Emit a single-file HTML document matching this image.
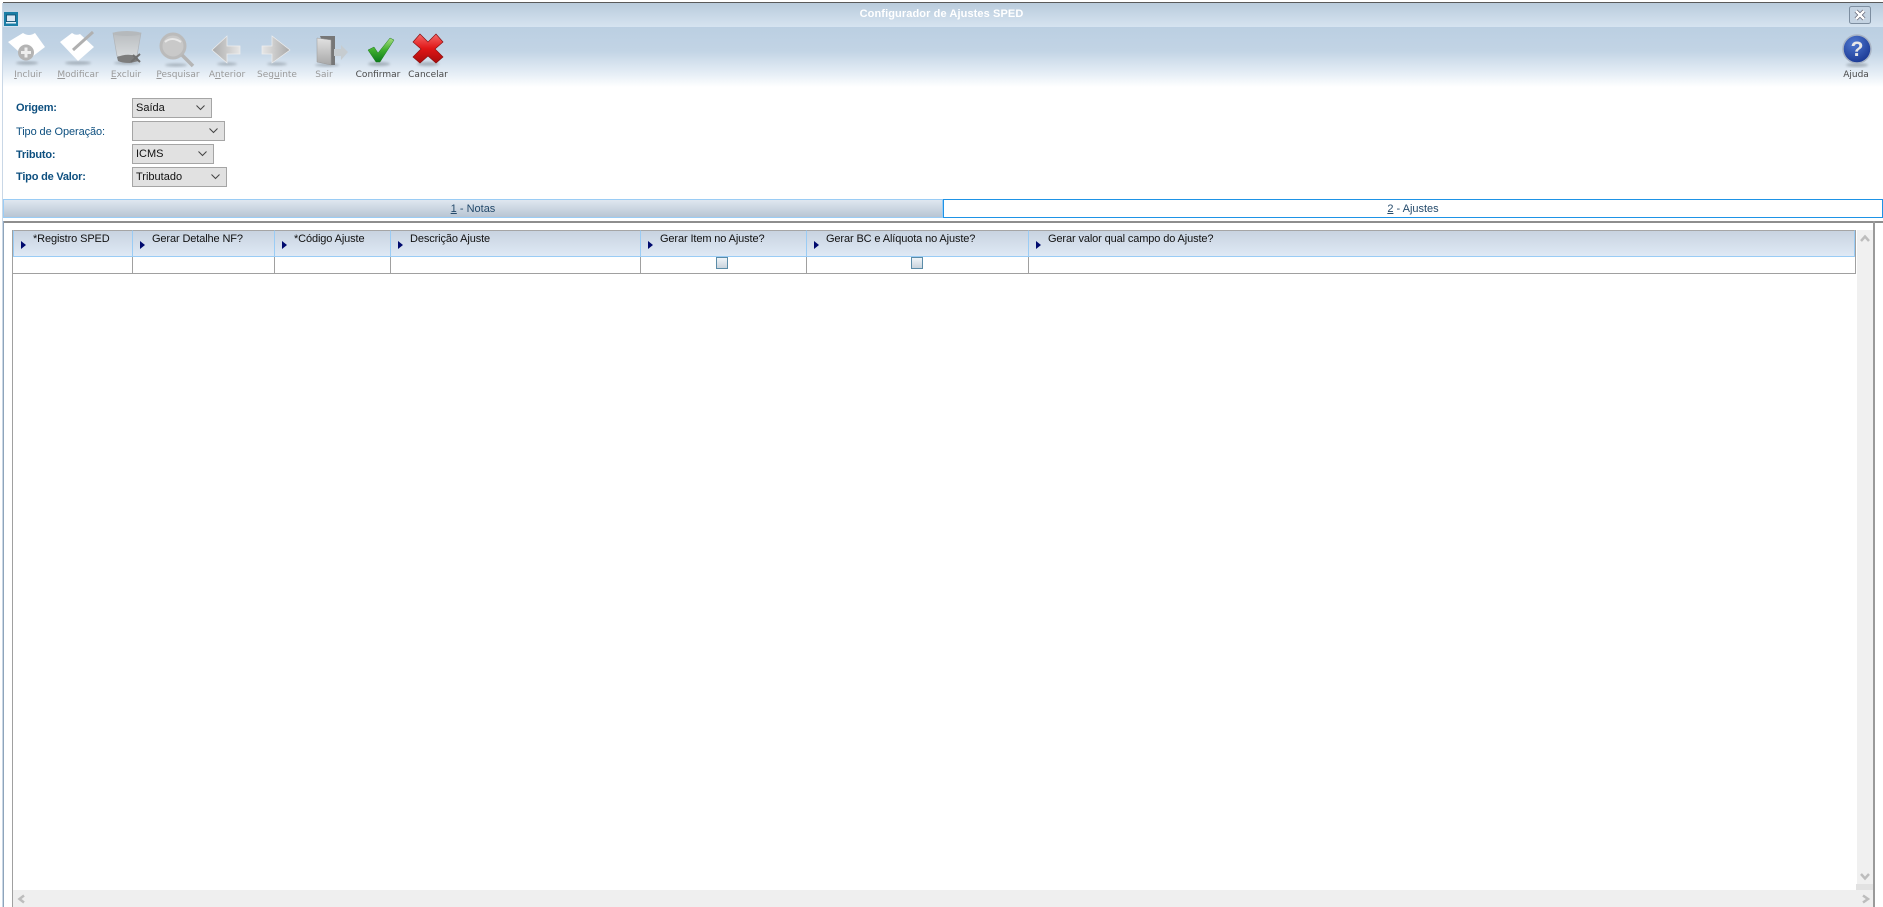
<!DOCTYPE html>
<html lang="pt"><head><meta charset="utf-8"><title>Configurador de Ajustes SPED</title>
<style>
html,body{margin:0;padding:0;width:1883px;height:907px;overflow:hidden;background:#fff}
body{position:relative;font-family:"Liberation Sans",sans-serif}
.a{position:absolute}
.t{position:absolute;white-space:nowrap}
.tb{position:absolute;top:69px;font:9px/12px "DejaVu Sans",sans-serif;color:#9a9a9a;transform:translateX(-50%);white-space:nowrap}
.tb.on{color:#4a4a4a}
.lb{position:absolute;left:16px;font:bold 11px/14px "Liberation Sans",sans-serif;color:#0d4f7f;letter-spacing:-.2px}
.sel{position:absolute;left:132px;height:18px;background:#e1e1e1;border:1px solid #a5a5a5;font:11px/18px "Liberation Sans",sans-serif;color:#111;padding-left:3px;box-sizing:content-box}
.sel svg{position:absolute;right:6px;top:6px}
.col{position:absolute;top:230px;height:27px;box-sizing:border-box;background:linear-gradient(#c8d3e0,#dfe9f5);border-left:1.5px solid #9accf5;border-bottom:1px solid #9accf5;border-top:1px solid #a5a5a5;font:11px/14px "Liberation Sans",sans-serif;color:#111;letter-spacing:-.12px}
.col span{position:absolute;top:1px;white-space:nowrap}
.col i{position:absolute;left:7px;top:10px;width:0;height:0;border-left:5px solid #000a6e;border-top:4px solid transparent;border-bottom:4px solid transparent}
.v{position:absolute;top:257px;height:16px;width:1px;background:#a0a0a0}
.cb{position:absolute;top:257px;width:10px;height:10px;border:1px solid #5b8ca8;background:linear-gradient(#f0f4f8,#c9d3dc)}
</style></head><body>

<div class="a" style="left:0;top:0;width:1883px;height:3px;background:#fff"></div>
<div class="a" style="left:3px;top:2px;width:1880px;height:1px;background:#5a5a5a"></div>
<div class="a" style="left:3px;top:3px;width:1880px;height:24px;background:linear-gradient(#b9cbdc,#d6e3f0)"></div>
<div class="a" style="left:3px;top:27px;width:1880px;height:60px;background:linear-gradient(#bbcfe2 0%,#c2d4e5 40%,#e6eef6 78%,#fff 100%)"></div>
<div class="a" style="left:2px;top:3px;width:1px;height:904px;background:#c9d7e6"></div>
<div class="t" style="left:0;width:1883px;top:7px;text-align:center;font:bold 11px/15px 'Liberation Sans',sans-serif;color:#fff;letter-spacing:.1px">Configurador de Ajustes SPED</div>

<svg class="a" style="left:0;top:0" width="1883" height="90" viewBox="0 0 1883 90">
<defs>
<linearGradient id="g1" x1="0" y1="0" x2="0" y2="1"><stop offset="0" stop-color="#e2e2e2"/><stop offset="1" stop-color="#a8a8a8"/></linearGradient>
<linearGradient id="g2" x1="0" y1="0" x2="1" y2="0"><stop offset="0" stop-color="#a9a9a9"/><stop offset="1" stop-color="#e6e6e6"/></linearGradient>
<linearGradient id="g3" x1="0" y1="0" x2="1" y2="0"><stop offset="0" stop-color="#e6e6e6"/><stop offset="1" stop-color="#a9a9a9"/></linearGradient>
<linearGradient id="g4" x1="0" y1="0" x2="0" y2="1"><stop offset="0" stop-color="#b9bdc0"/><stop offset="1" stop-color="#d9dcde"/></linearGradient>
<linearGradient id="gg" x1="0" y1="0" x2="0" y2="1"><stop offset="0" stop-color="#a8dc80"/><stop offset=".5" stop-color="#3fae2e"/><stop offset="1" stop-color="#0b7a1a"/></linearGradient>
<linearGradient id="gr" x1="0" y1="0" x2="0" y2="1"><stop offset="0" stop-color="#f56a6a"/><stop offset=".5" stop-color="#e01616"/><stop offset="1" stop-color="#a80c0c"/></linearGradient>
<radialGradient id="gb" cx=".4" cy=".3" r=".8"><stop offset="0" stop-color="#4f78d0"/><stop offset="1" stop-color="#14318c"/></radialGradient>
<filter id="b"><feGaussianBlur stdDeviation="1.2"/></filter>
</defs>
<!-- app icon -->
<rect x="4" y="12" width="14" height="14" fill="#1b7ea6"/>
<rect x="6.500" y="15" width="9" height="6.500" fill="#dbe8f4" stroke="#0d4a6c" stroke-width=".8"/>
<rect x="6" y="22" width="10" height="1.500" fill="#e6f0f8"/>
<!-- close -->
<rect x="1849.500" y="6.500" width="21" height="17" rx="2" fill="#c4d3e2" stroke="#7d8ea0"/>
<path d="M1856 11 L1864 19 M1864 11 L1856 19" stroke="#667" stroke-width="4"/>
<path d="M1856 11 L1864 19 M1864 11 L1856 19" stroke="#fff" stroke-width="2.400"/>
<!-- shadows -->
<g fill="#7d8791" opacity=".55" filter="url(#b)">
<ellipse cx="27" cy="63" rx="11" ry="1.800"/><ellipse cx="78" cy="63" rx="13" ry="1.800"/><ellipse cx="127" cy="63" rx="13" ry="1.500"/><ellipse cx="176" cy="65" rx="11" ry="1.500"/>
<ellipse cx="227" cy="64" rx="10" ry="1.500"/><ellipse cx="277" cy="64" rx="10" ry="1.500"/><ellipse cx="327" cy="65" rx="12" ry="1.500"/><ellipse cx="379" cy="64" rx="11" ry="2"/><ellipse cx="428" cy="64" rx="11" ry="2"/><ellipse cx="1857" cy="65" rx="11" ry="2"/>
</g>
<!-- incluir -->
<path d="M8 42 L23 33 Q29 37 35 33 L45 47 L28 60 Z" fill="#fff"/>
<circle cx="26" cy="52.500" r="8" fill="#b4b4b4"/>
<path d="M26 47.500 V57.500 M21 52.500 H31" stroke="#eee" stroke-width="3"/>
<!-- modificar -->
<path d="M60 42 L72 33 Q76 36 80 34 L94 47 L78 61 Z" fill="#fff"/>
<path d="M73 50 L93 32" stroke="#b0b0b0" stroke-width="3"/>
<!-- excluir -->
<path d="M113 33 L117 56 Q127 60 137 56 L141 33 Z" fill="url(#g4)" stroke="#b0b4b8" stroke-width=".7"/>
<ellipse cx="127" cy="33.500" rx="14" ry="2.500" fill="#b5b9bc"/>
<path d="M117 57 Q127 53 137 56 L139 61 L130 63 Q122 63 118 61 Z" fill="#7d7d7d"/>
<path d="M131 62 L140 54 M133 55 L140 62" stroke="#6f6f6f" stroke-width="2"/>
<!-- pesquisar -->
<circle cx="173" cy="46" r="12" fill="#c9c9c9" stroke="#bbb" stroke-width="3"/>
<path d="M182 55 L193 66" stroke="#b5b5b5" stroke-width="3.500"/>
<path d="M165 42 Q172 36 181 42" stroke="#e8e8e8" stroke-width="2" fill="none"/>
<!-- anterior -->
<path d="M212 50 L227 36 V46 H240 V54 H227 V63 Z" fill="url(#g2)" stroke="#eee" stroke-width=".7"/>
<!-- seguinte -->
<path d="M290 50 L272 36 V46 H262 V54 H272 V63 Z" fill="url(#g3)" stroke="#eee" stroke-width=".7"/>
<!-- sair -->
<path d="M320 36 H335 V65 H331 Z" fill="#777"/>
<path d="M317 38 L331 40 V65 L317 62 Z" fill="url(#g1)" stroke="#999" stroke-width=".5"/>
<path d="M348 52 L341 45 V49 H334 V56 H341 V60 Z" fill="#c6ccd0"/>
<!-- confirmar -->
<path d="M368 50 L374 47 L378 53 L390 38 L394 40 L380 62 L376 62 Z" fill="url(#gg)" stroke="#1d7a1d" stroke-width=".5"/>
<!-- cancelar -->
<path d="M413 42 L420 34 L428 42 L436 34 L443 42 L435 49 L443 57 L436 63 L428 56 L420 63 L413 57 L421 49 Z" fill="url(#gr)" stroke="#8a1010" stroke-width=".7"/>
<!-- ajuda -->
<circle cx="1857" cy="49" r="14" fill="url(#gb)" stroke="#a9b4c4" stroke-width="1.500"/>
<text x="1857" y="56" text-anchor="middle" font-family="Liberation Sans" font-weight="bold" font-size="21" fill="#e8e8e8">?</text>
</svg>

<div class="tb" style="left:28px"><u>I</u>ncluir</div>
<div class="tb" style="left:78px"><u>M</u>odificar</div>
<div class="tb" style="left:126px"><u>E</u>xcluir</div>
<div class="tb" style="left:178px"><u>P</u>esquisar</div>
<div class="tb" style="left:227px">A<u>n</u>terior</div>
<div class="tb" style="left:277px">Seg<u>u</u>inte</div>
<div class="tb" style="left:324px">Sair</div>
<div class="tb on" style="left:378px">Confirmar</div>
<div class="tb on" style="left:428px">Cancelar</div>
<div class="tb on" style="left:1856px">Ajuda</div>

<div class="lb" style="top:101px">Origem:</div>
<div class="lb" style="top:125px;font-weight:normal;letter-spacing:-.1px">Tipo de Operação:</div>
<div class="lb" style="top:148px">Tributo:</div>
<div class="lb" style="top:170px">Tipo de Valor:</div>

<div class="sel" style="top:98px;width:75px">Saída<svg width="9" height="6"><path d="M.5 .5 L4.500 4.500 L8.500 .5" fill="none" stroke="#444"/></svg></div>
<div class="sel" style="top:121px;width:88px"><svg width="9" height="6"><path d="M.5 .5 L4.500 4.500 L8.500 .5" fill="none" stroke="#444"/></svg></div>
<div class="sel" style="top:144px;width:77px">ICMS<svg width="9" height="6"><path d="M.5 .5 L4.500 4.500 L8.500 .5" fill="none" stroke="#444"/></svg></div>
<div class="sel" style="top:167px;width:90px">Tributado<svg width="9" height="6"><path d="M.5 .5 L4.500 4.500 L8.500 .5" fill="none" stroke="#444"/></svg></div>

<!-- tabs -->
<div class="a" style="left:3px;top:199px;width:940px;height:19px;box-sizing:border-box;border:1px solid #9accf5;background:linear-gradient(#dfe7f0,#b8c5d3);font:11px/18px 'Liberation Sans',sans-serif;color:#244a6b;text-align:center"><u>1</u> - Notas</div>
<div class="a" style="left:943px;top:199px;width:940px;height:19px;box-sizing:border-box;border:1px solid #1e93e6;background:#fff;font:11px/18px 'Liberation Sans',sans-serif;color:#244a6b;text-align:center"><u>2</u> - Ajustes</div>

<!-- frame -->
<div class="a" style="left:3px;top:221px;width:1880px;height:2px;background:#8e8e8e"></div>
<div class="a" style="left:3px;top:221px;width:1px;height:686px;background:#8ea4ba"></div>
<div class="a" style="left:1873px;top:221px;width:2px;height:686px;background:#9a9a9a"></div>

<!-- table -->
<div class="a" style="left:12px;top:230px;width:1844px;height:44px;box-sizing:border-box;border:1px solid #a0a0a0;background:#fff"></div>
<div class="a" style="left:12px;top:230px;width:1px;height:677px;background:#a0a0a0"></div>

<div class="col" style="left:13px;width:120px"><i></i><span style="left:19px">*Registro SPED</span></div>
<div class="col" style="left:132px;width:142px"><i></i><span style="left:19px">Gerar Detalhe NF?</span></div>
<div class="col" style="left:274px;width:116px"><i></i><span style="left:19px">*Código Ajuste</span></div>
<div class="col" style="left:390px;width:251px"><i></i><span style="left:19px">Descrição Ajuste</span></div>
<div class="col" style="left:640px;width:167px"><i></i><span style="left:19px">Gerar Item no Ajuste?</span></div>
<div class="col" style="left:806px;width:223px"><i></i><span style="left:19px">Gerar BC e Alíquota no Ajuste?</span></div>
<div class="col" style="left:1028px;width:827px;border-right:1px solid #9accf5"><i></i><span style="left:19px">Gerar valor qual campo do Ajuste?</span></div>

<div class="v" style="left:132px"></div><div class="v" style="left:274px"></div><div class="v" style="left:390px"></div><div class="v" style="left:640px"></div><div class="v" style="left:806px"></div><div class="v" style="left:1028px"></div>
<div class="cb" style="left:716px"></div><div class="cb" style="left:911px"></div>

<!-- scrollbars -->
<div class="a" style="left:1857px;top:230px;width:16px;height:654px;background:#f0f0f0"></div>
<div class="a" style="left:1856px;top:884px;width:17px;height:6px;background:#e2e2e2"></div>
<div class="a" style="left:13px;top:890px;width:1860px;height:17px;background:#efefef"></div>
<svg class="a" style="left:0;top:0;pointer-events:none" width="1883" height="907" viewBox="0 0 1883 907">
<g fill="none" stroke="#bdbdbd" stroke-width="2.500">
<path d="M1861 241 L1865 236.500 L1869 241"/>
<path d="M1861 874 L1865 878.500 L1869 874"/>
<path d="M1863 895.500 L1868 899 L1863 902.500"/>
<path d="M24 895.500 L19.500 899 L24 902.500"/>
</g></svg>
</body></html>
